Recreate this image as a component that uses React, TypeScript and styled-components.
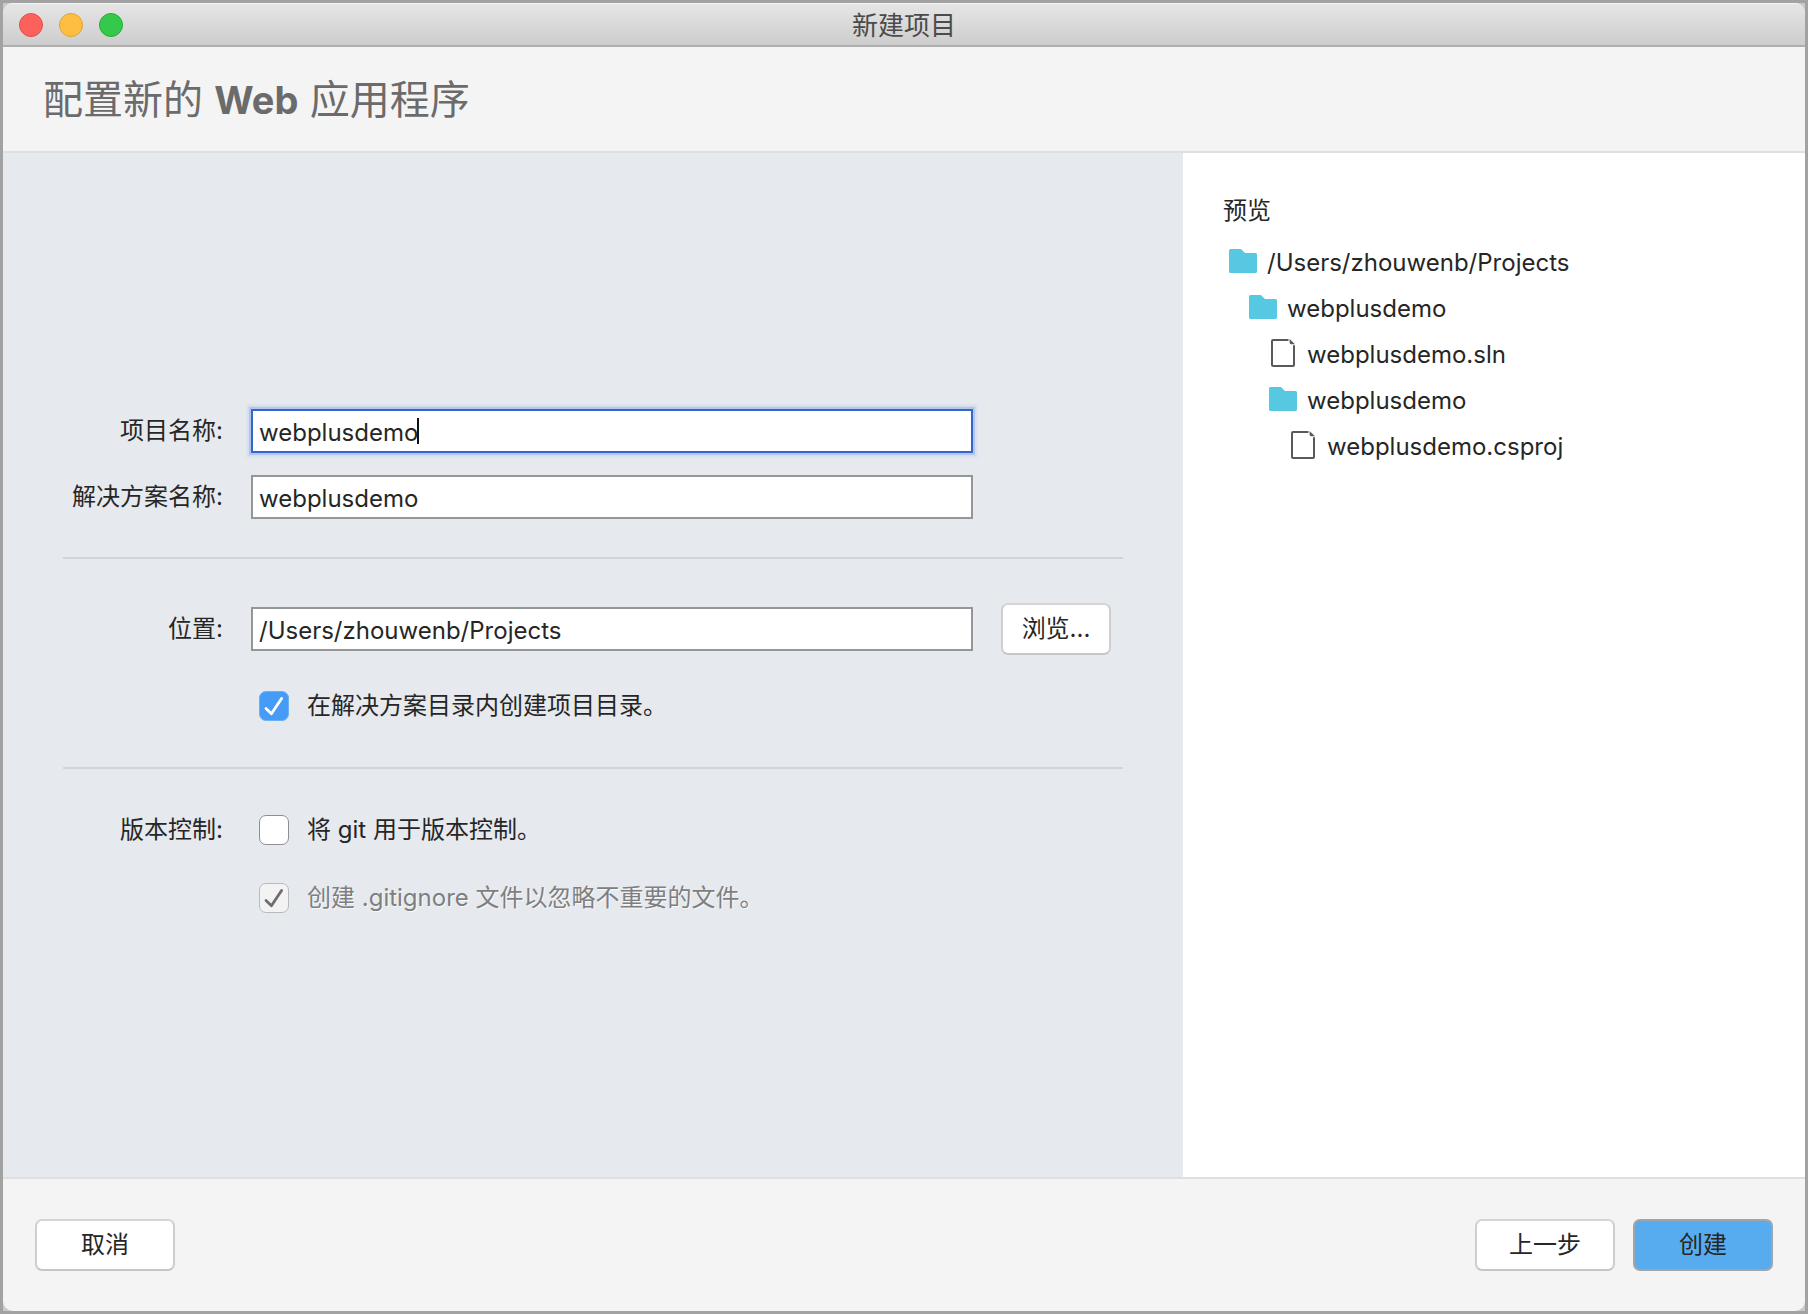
import React, { useLayoutEffect, useState } from "react";
import styled, { createGlobalStyle, css } from "styled-components";

const fontStack = `Inter, "Noto Sans CJK SC", sans-serif`;

const GlobalStyle = createGlobalStyle`
  *, *::before, *::after { box-sizing: border-box; }
  body {
    margin: 0;
    font-family: ${fontStack};
    font-size: 24px;
    line-height: 36px;
    color: #262626;
  }
  button, input { font: inherit; color: inherit; }
`;

const Frame = styled.div`
  display: flex;
  min-height: 100vh;
  border: 3px solid #a2a2a2;
  background: #c9c9c9;
`;

const Window = styled.div`
  flex: 1;
  min-width: 0;
  display: flex;
  flex-direction: column;
  border-radius: 10px;
  overflow: hidden;
  background: #f4f4f4;
`;

const TitleBar = styled.header`
  display: grid;
  grid-template-columns: 1fr auto 1fr;
  align-items: center;
  height: 44px;
  padding: 2px 16px 0;
  border-bottom: 2px solid #aeaeae;
  background: linear-gradient(#e6e6e6, #cdcdcd);
  box-shadow: inset 0 1px 0 #f4f4f4;
`;

const Lights = styled.div`
  display: flex;
  gap: 16px;
`;

const Light = styled.button<{ $fill: string; $edge: string }>`
  width: 24px;
  height: 24px;
  padding: 0;
  border: 1px solid ${(p) => p.$edge};
  border-radius: 50%;
  background: ${(p) => p.$fill};
`;

const WindowTitle = styled.div`
  padding-top: 2px;
  font-size: 26px;
  color: #4b4b4b;
`;

const Banner = styled.div`
  display: flex;
  align-items: center;
  height: 106px;
  padding: 2px 40px 0;
  border-bottom: 2px solid #dfdfdf;
`;

const Heading = styled.h1`
  margin: 0;
  font-size: 40px;
  line-height: 48px;
  font-weight: 400;
  color: #6b6b6b;
`;

const HeadingStrong = styled.b`
  font-size: 38px;
`;

const Body = styled.main`
  flex: 1;
  display: grid;
  grid-template-columns: minmax(0, 1fr) 622px;
`;

const FormPane = styled.form`
  display: flex;
  flex-direction: column;
  justify-content: center;
  padding: 0 60px 5px;
  background: #e6e9ee;
`;

const Section = styled.section<{ $gap: number }>`
  display: flex;
  flex-direction: column;
  gap: ${(p) => p.$gap}px;
`;

const Row = styled.div`
  display: grid;
  grid-template-columns: 160px minmax(0, 1fr) 122px;
  align-items: center;
  column-gap: 28px;
`;

const labelText = css`
  text-align: right;
  white-space: nowrap;
`;

const FieldLabel = styled.label`
  ${labelText}
`;

const GroupLabel = styled.span`
  ${labelText}
`;

const FieldBox = styled.div`
  position: relative;
`;

const TextField = styled.input<{ $active?: boolean }>`
  display: block;
  width: 100%;
  height: 44px;
  padding: 2px 6px 0;
  border: 2px solid ${(p) => (p.$active ? "#3465cf" : "#949698")};
  border-radius: 0;
  background: #fff;
  outline: none;
  caret-color: transparent;
  ${(p) => p.$active && "box-shadow: 0 0 0 2px #b1c7ec, 0 0 2px 4px #d2dcee;"}
`;

const Caret = styled.span`
  position: absolute;
  top: 9px;
  width: 2px;
  height: 26px;
  background: #111;
`;

const Divider = styled.hr<{ $above: number; $below: number }>`
  width: 100%;
  height: 2px;
  margin: ${(p) => p.$above}px 0 ${(p) => p.$below}px;
  border: 0;
  background: #d1d4d8;
`;

const Push = styled.button<{ $primary?: boolean; $width: number }>`
  width: ${(p) => p.$width}px;
  height: 52px;
  padding: 0;
  border: 2px solid;
  border-color: ${(p) => (p.$primary ? "#a0a5aa" : "#d4d4d4 #cecece #c6c6c6")};
  border-radius: 7px;
  background: ${(p) => (p.$primary ? "#57acf0" : "#fff")};
`;

const CheckRow = styled.div<{ $muted?: boolean }>`
  grid-column: 2;
  display: flex;
  align-items: center;
  gap: 18px;
  height: 36px;
  padding-left: 8px;
  white-space: nowrap;
  ${(p) => p.$muted && "color: #7e7f81; text-shadow: 1px 1px 0 #f7f8fa;"}
`;

const CheckBoxWrap = styled.span`
  position: relative;
  flex: none;
  width: 30px;
  height: 30px;
`;

const CheckInput = styled.input`
  appearance: none;
  display: block;
  width: 30px;
  height: 30px;
  margin: 0;
  border: 1px solid #8e8f91;
  border-radius: 7px;
  background: #fff;

  &:checked {
    border-color: #6cb0f5;
    background: #459bf5;
  }
  &:disabled {
    border-color: #b9babb;
    background: #f3f3f3;
  }
`;

const Tick = styled.svg`
  position: absolute;
  inset: 0;
  pointer-events: none;
`;

const PreviewPane = styled.aside`
  padding: 40px;
  background: #fff;
`;

const PreviewTitle = styled.h2`
  margin: 0 0 9px;
  font-size: 24px;
  font-weight: 400;
`;

const Tree = styled.ul`
  margin: 0;
  padding: 0;
  list-style: none;
`;

const TreeItem = styled.li<{ $depth: number }>`
  display: flex;
  align-items: center;
  gap: 10px;
  height: 46px;
  padding-left: ${(p) => 6 + p.$depth * 20}px;
`;

const TreeName = styled.span`
  padding-top: 4px;
`;

const Footer = styled.footer`
  display: flex;
  align-items: center;
  gap: 18px;
  height: 134px;
  padding: 0 32px;
  border-top: 2px solid #dfdfe0;
`;

const Spacer = styled.span`
  flex: 1;
`;

const FolderIcon = () => (
  <svg width="28" height="28" viewBox="0 0 28 28" aria-hidden="true">
    <path d="M1.5 2H11.5L12.5 2.4L16 6H26.5Q28 6 28 7.5V24.5Q28 26 26.5 26H1.5Q0 26 0 24.5V3.5Q0 2 1.5 2Z" fill="#56c8e2" />
  </svg>
);

const FileIcon = () => (
  <svg width="28" height="28" viewBox="0 0 28 28" aria-hidden="true">
    <path d="M19.5 1H4Q3 1 3 2V26Q3 27 4 27H24Q25 27 25 26V6.3" fill="none" stroke="#595959" strokeWidth="2" />
    <path d="M20.6 0L26 5.2H22.2Q20.6 5.2 20.6 3.6Z" fill="#595959" />
  </svg>
);

const tree = [
  { name: "/Users/zhouwenb/Projects", depth: 0, folder: true },
  { name: "webplusdemo", depth: 1, folder: true },
  { name: "webplusdemo.sln", depth: 2, folder: false },
  { name: "webplusdemo", depth: 2, folder: true },
  { name: "webplusdemo.csproj", depth: 3, folder: false },
];

interface CheckProps {
  id: string;
  label: string;
  checked?: boolean;
  disabled?: boolean;
}

function Check({ id, label, checked = false, disabled }: CheckProps) {
  const [on, setOn] = useState(checked);
  return (
    <CheckRow $muted={disabled}>
      <CheckBoxWrap>
        <CheckInput
          id={id}
          type="checkbox"
          checked={on}
          disabled={disabled}
          onChange={(e) => setOn(e.target.checked)}
        />
        {on && (
          <Tick width="30" height="30" viewBox="0 0 30 30" aria-hidden="true">
            <path
              d="M7 17.5L12.4 22.8L22.6 7.4"
              fill="none"
              stroke={disabled ? "#6e6e6e" : "#fff"}
              strokeWidth="2.8"
              strokeLinecap="round"
              strokeLinejoin="round"
            />
          </Tick>
        )}
      </CheckBoxWrap>
      <label htmlFor={id}>{label}</label>
    </CheckRow>
  );
}

function NameField() {
  const [name, setName] = useState("webplusdemo");
  const [caret, setCaret] = useState(0);

  useLayoutEffect(() => {
    const ctx = document.createElement("canvas").getContext("2d");
    if (!ctx) return;
    ctx.font = `24px ${fontStack}`;
    setCaret(Math.round(ctx.measureText(name).width) + 7);
  }, [name]);

  return (
    <FieldBox>
      <TextField id="project-name" $active value={name} onChange={(e) => setName(e.target.value)} />
      <Caret style={{ left: caret }} />
    </FieldBox>
  );
}

export default function App() {
  return (
    <>
      <GlobalStyle />
      <Frame>
        <Window>
          <TitleBar>
            <Lights>
              <Light type="button" aria-label="关闭" $fill="#fc615c" $edge="#e2504b" />
              <Light type="button" aria-label="最小化" $fill="#fdbe41" $edge="#e0a033" />
              <Light type="button" aria-label="缩放" $fill="#34c94a" $edge="#27aa35" />
            </Lights>
            <WindowTitle>新建项目</WindowTitle>
          </TitleBar>
          <Banner>
            <Heading>
              配置新的 <HeadingStrong>Web</HeadingStrong> 应用程序
            </Heading>
          </Banner>
          <Body>
            <FormPane id="project-form" onSubmit={(e) => e.preventDefault()}>
              <Section $gap={22}>
                <Row>
                  <FieldLabel htmlFor="project-name">项目名称:</FieldLabel>
                  <NameField />
                </Row>
                <Row>
                  <FieldLabel htmlFor="solution-name">解决方案名称:</FieldLabel>
                  <TextField id="solution-name" defaultValue="webplusdemo" />
                </Row>
              </Section>
              <Divider $above={38} $below={44} />
              <Section $gap={33}>
                <Row>
                  <FieldLabel htmlFor="location">位置:</FieldLabel>
                  <TextField id="location" defaultValue="/Users/zhouwenb/Projects" />
                  <Push type="button" $width={110}>浏览...</Push>
                </Row>
                <Row>
                  <Check id="project-dir" label="在解决方案目录内创建项目目录。" checked />
                </Row>
              </Section>
              <Divider $above={43} $below={43} />
              <Section $gap={32}>
                <Row>
                  <GroupLabel>版本控制:</GroupLabel>
                  <Check id="use-git" label="将 git 用于版本控制。" />
                </Row>
                <Row>
                  <Check id="gitignore" label="创建 .gitignore 文件以忽略不重要的文件。" checked disabled />
                </Row>
              </Section>
            </FormPane>
            <PreviewPane>
              <PreviewTitle>预览</PreviewTitle>
              <Tree>
                {tree.map((item, i) => (
                  <TreeItem key={i} $depth={item.depth}>
                    {item.folder ? <FolderIcon /> : <FileIcon />}
                    <TreeName>{item.name}</TreeName>
                  </TreeItem>
                ))}
              </Tree>
            </PreviewPane>
          </Body>
          <Footer>
            <Push type="button" $width={140}>取消</Push>
            <Spacer />
            <Push type="button" $width={140}>上一步</Push>
            <Push type="submit" form="project-form" $width={140} $primary>创建</Push>
          </Footer>
        </Window>
      </Frame>
    </>
  );
}
